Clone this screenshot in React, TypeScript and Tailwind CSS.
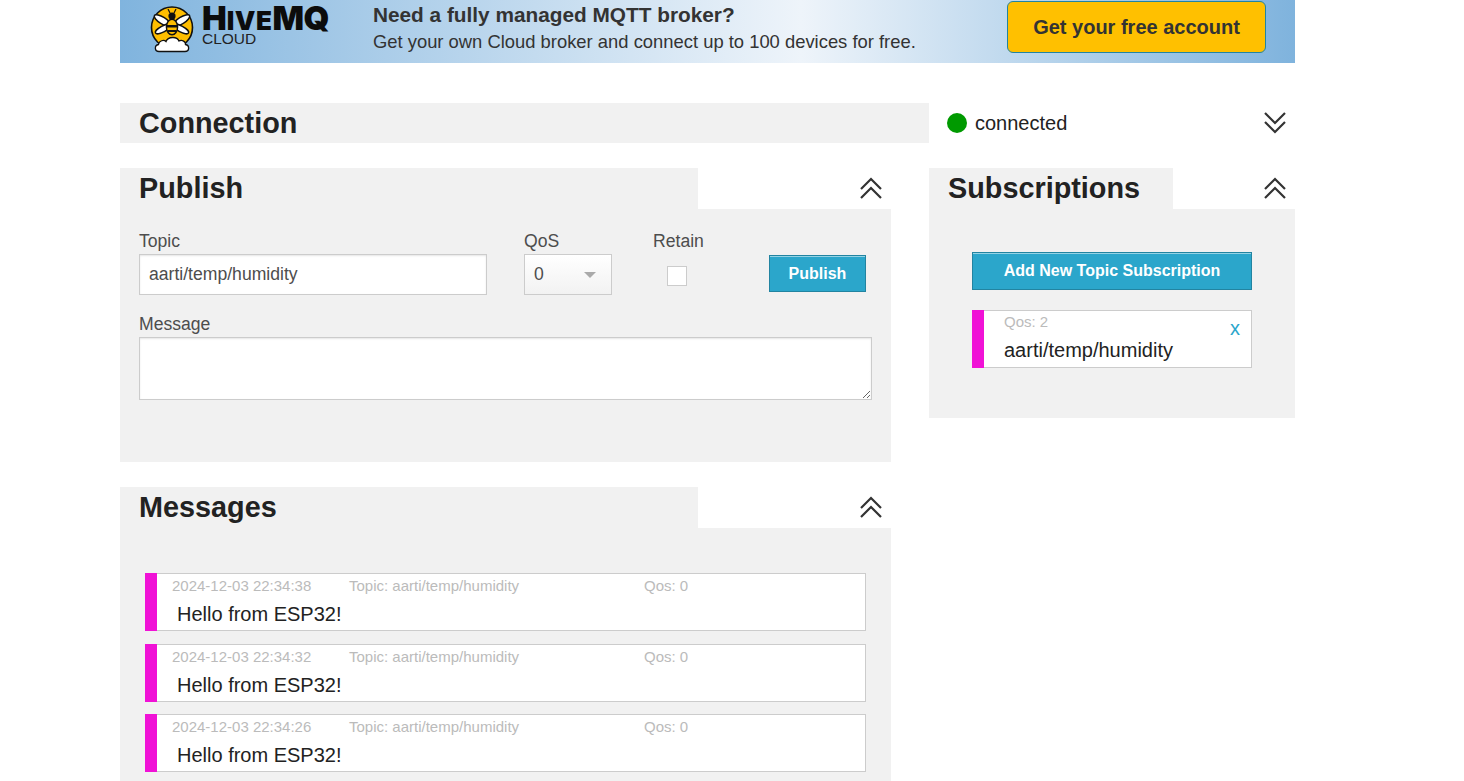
import React from "react";

const Chevrons = ({ down = false }: { down?: boolean }) => (
  <svg width="22" height="24" viewBox="0 0 22 24" fill="none" stroke="#333" strokeWidth="2.2" className="block">
    {down ? (
      <>
        <path d="M1 2 L11 12 L21 2" />
        <path d="M1 11 L11 21 L21 11" />
      </>
    ) : (
      <>
        <path d="M1 13 L11 3 L21 13" />
        <path d="M1 22 L11 12 L21 22" />
      </>
    )}
  </svg>
);

const Bee = () => (
  <svg width="46" height="52" viewBox="0 0 46 52" className="block shrink-0">
    <circle cx="22" cy="25.5" r="20.5" fill="#ffbe00" stroke="#111" strokeWidth="1.6" />
    <g stroke="#111" strokeWidth="1.5" fill="#fff">
      <ellipse cx="12.5" cy="18.5" rx="9.5" ry="3.4" transform="rotate(32 12.5 18.5)" />
      <ellipse cx="31.5" cy="18.5" rx="9.5" ry="3.4" transform="rotate(-32 31.5 18.5)" />
      <ellipse cx="13" cy="27" rx="8.5" ry="3" transform="rotate(-28 13 27)" />
      <ellipse cx="31" cy="27" rx="8.5" ry="3" transform="rotate(28 31 27)" />
    </g>
    <ellipse cx="22" cy="25" rx="5.6" ry="7.8" fill="#ffbe00" stroke="#111" strokeWidth="1.4" />
    <path d="M16.8 23 H27.2 V25.6 H16.8 Z M17.6 28 H26.4 V30 H17.6 Z" fill="#111" />
    <circle cx="22" cy="14" r="3.6" fill="#111" />
    <path d="M20 11 L18 7 M24 11 L26 7" stroke="#111" strokeWidth="1.2" />
    <path
      d="M9 49.5 C4.5 49.5 4 43.5 8.5 42.5 C9 38.5 14 37.5 16 39.5 C18 34.5 27 34 29 39 C32 37.5 36 39.5 35.5 42.5 C40 43.5 39.5 49.5 35 49.5 Z"
      fill="#fff"
      stroke="#111"
      strokeWidth="1.3"
    />
  </svg>
);

const Logo = () => (
  <div className="flex items-start gap-[6px] mt-[2px]">
    <Bee />
    <div className="flex flex-col text-[#111] mt-[1px]">
      <div className="font-['Inter',sans-serif] font-black h-[30px] flex items-baseline leading-[30px] text-[#0c0c0c]">
        <span className="text-[33px]">H</span>
        <span className="text-[26px] tracking-[0.5px]">IVE</span>
        <span className="text-[33px] tracking-[-0.5px]">MQ</span>
      </div>
      <div className="text-[15.5px] leading-[14px] -mt-[1px] text-[#222]">CLOUD</div>
    </div>
  </div>
);

const Panel = ({
  title,
  tab,
  children,
  className,
}: {
  title: string;
  tab: string;
  children: React.ReactNode;
  className: string;
}) => (
  <section className="w-full">
    <div className="flex justify-between h-[41px]">
      <h2 className={`${tab} bg-[#f1f1f1] pl-[19px] text-[28.8px] font-bold leading-[40px] text-[#222]`}>{title}</h2>
      <div className="pr-[9px] pt-[8px]">
        <Chevrons />
      </div>
    </div>
    <div className={`bg-[#f1f1f1] ${className}`}>{children}</div>
  </section>
);

const Message = ({ time }: { time: string }) => (
  <div className="flex h-[58px] w-[721px]">
    <div className="w-[12px] bg-[#f012d6] shrink-0" />
    <div className="flex-1 bg-white border border-l-0 border-[#ccc]">
      <div className="flex text-[15px] leading-[22px] text-[#bbb] pl-[15px] pt-[1px]">
        <span className="w-[177px]">{time}</span>
        <span className="w-[295px]">Topic: aarti/temp/humidity</span>
        <span>Qos: 0</span>
      </div>
      <div className="pl-[20px] text-[20px] leading-[29px] text-[#222] mt-[3px]">Hello from ESP32!</div>
    </div>
  </div>
);

const fieldClass =
  "border border-[#ccc] bg-white shadow-[inset_0_1px_2px_rgba(0,0,0,0.1)] text-[17.6px] text-[#4d4d4d] outline-none block";

export default function App() {
  return (
    <div className="h-[781px] overflow-hidden bg-white font-['Liberation_Sans',Arial,sans-serif]">
      <div className="w-[1175px] ml-[120px]">
        <div className="h-[63px] flex items-start pl-[30px] pr-[29px] justify-between bg-[linear-gradient(90deg,#80b4de_0%,#eef4fa_58%,#7fb3dd_100%)]">
          <div className="flex items-start">
            <Logo />
            <div className="ml-[44px] pt-[1px] text-[#333]">
              <div className="text-[20.8px] font-bold leading-[28px]">Need a fully managed MQTT broker?</div>
              <div className="text-[18.4px] leading-[26px]">Get your own Cloud broker and connect up to 100 devices for free.</div>
            </div>
          </div>
          <div className="mt-[1px] w-[259px] h-[52px] rounded-[6px] bg-[#ffc000] border border-[#2284a1] flex items-center justify-center text-[20px] font-bold text-[#333]">
            Get your free account
          </div>
        </div>

        <div className="flex mt-[40px] h-[40px]">
          <h2 className="w-[809px] bg-[#f1f1f1] pl-[19px] text-[28.8px] font-bold leading-[40px] text-[#222]">Connection</h2>
          <div className="flex-1 flex items-center pl-[18px] pr-[9px]">
            <span className="w-[20px] h-[20px] rounded-full bg-[#009a00]" />
            <span className="ml-[8px] text-[20px] text-[#222]">connected</span>
            <div className="ml-auto">
              <Chevrons down />
            </div>
          </div>
        </div>

        <div className="flex mt-[25px] gap-[38px] items-start">
          <div className="w-[771px] flex flex-col gap-[25px]">
            <Panel title="Publish" tab="w-[578px]" className="h-[253px] pl-[19px] pt-[20px]">
              <div className="flex items-start">
                <label className="w-[385px] block">
                  <div className="text-[17.6px] leading-[25px] text-[#4d4d4d]">Topic</div>
                  <input readOnly value="aarti/temp/humidity" className={`${fieldClass} w-[348px] h-[41px] px-[9px]`} />
                </label>
                <div className="w-[129px]">
                  <div className="text-[17.6px] leading-[25px] text-[#4d4d4d]">QoS</div>
                  <div className="w-[88px] h-[41px] border border-[#ccc] bg-[linear-gradient(180deg,#ffffff,#f2f2f2)] flex items-center justify-between pl-[9px] pr-[15px] text-[17.6px] text-[#4d4d4d]">
                    <span>0</span>
                    <span className="w-0 h-0 border-x-[6px] border-x-transparent border-t-[6px] border-t-[#aaa]" />
                  </div>
                </div>
                <div className="w-[116px]">
                  <div className="text-[17.6px] leading-[25px] text-[#4d4d4d]">Retain</div>
                  <input
                    type="checkbox"
                    readOnly
                    className="appearance-none block w-[20px] h-[20px] ml-[14px] mt-[12px] border border-[#ccc] bg-white"
                  />
                </div>
                <button className="mt-[26px] w-[97px] h-[37px] bg-[#2ba6cb] border border-[#2284a1] shadow-[inset_0_1px_0_rgba(255,255,255,0.5)] text-white font-bold text-[16px]">
                  Publish
                </button>
              </div>
              <div className="text-[17.6px] leading-[25px] text-[#4d4d4d] mt-[17px]">Message</div>
              <textarea readOnly className={`${fieldClass} w-[733px] h-[63px]`} />
            </Panel>

            <Panel title="Messages" tab="w-[578px]" className="h-[300px] pl-[25px] pt-[45px]">
              <div className="flex flex-col gap-[12.5px]">
                <Message time="2024-12-03 22:34:38" />
                <Message time="2024-12-03 22:34:32" />
                <Message time="2024-12-03 22:34:26" />
              </div>
            </Panel>
          </div>

          <div className="w-[366px]">
            <Panel title="Subscriptions" tab="w-[244px]" className="h-[209px] pl-[43px] pt-[43px]">
              <button className="block w-[280px] h-[38px] bg-[#2ba6cb] border border-[#2284a1] shadow-[inset_0_1px_0_rgba(255,255,255,0.5)] text-white font-bold text-[16px]">
                Add New Topic Subscription
              </button>
              <div className="flex mt-[20px] h-[58px] w-[280px]">
                <div className="w-[12px] bg-[#f012d6] shrink-0" />
                <div className="flex-1 relative bg-white border border-l-0 border-[#ccc] pl-[20px]">
                  <div className="text-[15px] leading-[22px] text-[#bbb]">Qos: 2</div>
                  <div className="text-[20px] leading-[29px] text-[#222] mt-[3px]">aarti/temp/humidity</div>
                  <span className="absolute right-[11px] top-[3px] text-[20px] leading-[28px] text-[#2ba6cb]">x</span>
                </div>
              </div>
            </Panel>
          </div>
        </div>
      </div>
    </div>
  );
}
